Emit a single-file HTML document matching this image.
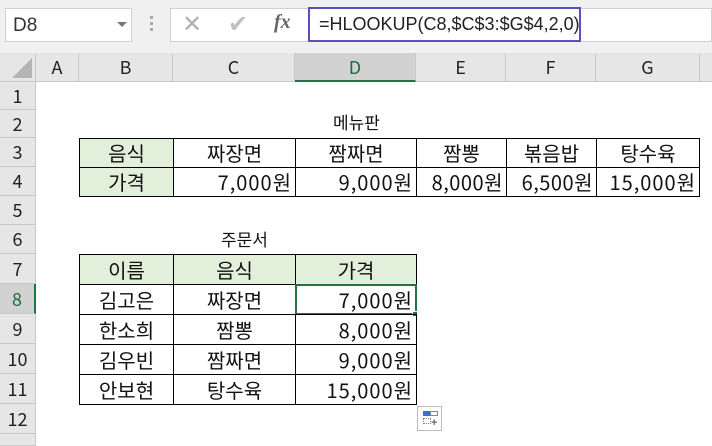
<!DOCTYPE html>
<html><head><meta charset="utf-8"><style>
*{margin:0;padding:0;box-sizing:border-box}
html,body{width:712px;height:446px;overflow:hidden}
body{background:#fff;position:relative;font-family:"Liberation Sans","Noto Sans CJK KR",sans-serif}
.a{position:absolute}
.top{left:0;top:0;width:712px;height:53px;background:#f0f0f0}
.ch{position:absolute;top:53px;height:29px;background:#e6e6e6;border-right:1px solid #c8c8c8;border-bottom:1px solid #c8c8c8;font-size:18px;color:#222;text-align:center;line-height:29px;font-family:"Noto Sans CJK KR",sans-serif}
.rh{position:absolute;left:0;width:36px;background:#e6e6e6;border-right:1px solid #c8c8c8;border-bottom:1px solid #c8c8c8;font-size:18px;color:#222;text-align:center;font-family:"Noto Sans CJK KR",sans-serif}
.c{position:absolute;border:1px solid #000;font-size:20px;color:#111;display:flex;align-items:center;justify-content:center;font-family:"Noto Sans CJK KR",sans-serif;line-height:1;white-space:nowrap}
.g{background:#e2efda}
.r{justify-content:flex-end;padding-right:3px;letter-spacing:1px}
</style></head><body>
<div class="a top"></div>
<div class="a" style="left:5px;top:8px;width:127px;height:34px;background:#fff;border:1px solid #d0d0d0;font-size:19px;color:#333;padding:6px 0 0 7px">D8</div>
<div class="a" style="left:117px;top:22px;width:0;height:0;border-left:5px solid transparent;border-right:5px solid transparent;border-top:5px solid #777"></div>
<div class="a" style="left:150px;top:16px;width:3px;height:3px;background:#aaa;box-shadow:0 6px #aaa,0 12px #aaa"></div>
<div class="a" style="left:170px;top:8px;width:542px;height:34px;background:#fff;border:1px solid #d0d0d0"></div>
<div class="a" style="left:182px;top:10px;font-size:24px;color:#b0b0b0">✕</div>
<div class="a" style="left:228px;top:10px;font-size:24px;color:#c0c0c0">✔</div>
<div class="a" style="left:274px;top:11px;font-size:20px;color:#666;font-style:italic;font-family:'Liberation Serif',serif;font-weight:bold">fx</div>
<div class="a" style="left:308px;top:7px;width:273px;height:35px;border:2px solid #5a4fc0;background:#fff;font-size:18px;color:#222;padding:5px 0 0 9px;white-space:nowrap">=HLOOKUP(C8,$C$3:$G$4,2,0)</div>

<div class="ch" style="left:0;width:36px;background:#e6e6e6"></div>
<div class="a" style="left:12px;top:58px;width:0;height:0;border-left:20px solid transparent;border-bottom:20px solid #b4b4b4"></div>
<div class="ch" style="left:36px;width:43px">A</div>
<div class="ch" style="left:79px;width:94px">B</div>
<div class="ch" style="left:173px;width:122px">C</div>
<div class="ch" style="left:295px;width:121px;background:#d2d2d2;color:#1f6b3d;border-bottom:2px solid #217346">D</div>
<div class="ch" style="left:416px;width:90px">E</div>
<div class="ch" style="left:506px;width:90px">F</div>
<div class="ch" style="left:596px;width:104px">G</div>
<div class="ch" style="left:700px;width:20px"></div>

<div class="rh" style="top:82px;height:28px;line-height:28px">1</div>
<div class="rh" style="top:110px;height:28px;line-height:28px">2</div>
<div class="rh" style="top:138px;height:29px;line-height:29px">3</div>
<div class="rh" style="top:167px;height:29px;line-height:29px">4</div>
<div class="rh" style="top:196px;height:29px;line-height:29px">5</div>
<div class="rh" style="top:225px;height:29px;line-height:29px">6</div>
<div class="rh" style="top:254px;height:30px;line-height:30px">7</div>
<div class="rh" style="top:284px;height:30px;line-height:30px;background:#d2d2d2;color:#1f6b3d;border-right:2px solid #217346">8</div>
<div class="rh" style="top:314px;height:30px;line-height:30px">9</div>
<div class="rh" style="top:344px;height:30px;line-height:30px">10</div>
<div class="rh" style="top:374px;height:30px;line-height:30px">11</div>
<div class="rh" style="top:404px;height:30px;line-height:30px">12</div>
<div class="rh" style="top:434px;height:12px"></div>

<div class="a" style="left:333px;top:112px;font-size:17px;color:#111;font-family:'Noto Sans CJK KR',sans-serif;line-height:1.2">메뉴판</div>
<div class="c g" style="left:79px;top:138px;width:95px;height:30px">음식</div>
<div class="c" style="left:173px;top:138px;width:123px;height:30px">짜장면</div>
<div class="c" style="left:295px;top:138px;width:122px;height:30px">짬짜면</div>
<div class="c" style="left:416px;top:138px;width:91px;height:30px">짬뽕</div>
<div class="c" style="left:506px;top:138px;width:91px;height:30px">볶음밥</div>
<div class="c" style="left:596px;top:138px;width:104px;height:30px">탕수육</div>
<div class="c g" style="left:79px;top:167px;width:95px;height:30px">가격</div>
<div class="c r" style="left:173px;top:167px;width:123px;height:30px">7,000원</div>
<div class="c r" style="left:295px;top:167px;width:122px;height:30px">9,000원</div>
<div class="c r" style="left:416px;top:167px;width:91px;height:30px;letter-spacing:0.5px">8,000원</div>
<div class="c r" style="left:506px;top:167px;width:91px;height:30px;letter-spacing:0.5px">6,500원</div>
<div class="c r" style="left:596px;top:167px;width:104px;height:30px">15,000원</div>

<div class="a" style="left:221px;top:229px;font-size:17px;color:#111;font-family:'Noto Sans CJK KR',sans-serif;line-height:1.2">주문서</div>
<div class="c g" style="left:79px;top:254px;width:95px;height:31px">이름</div>
<div class="c g" style="left:173px;top:254px;width:123px;height:31px">음식</div>
<div class="c g" style="left:295px;top:254px;width:122px;height:31px">가격</div>
<div class="c" style="left:79px;top:284px;width:95px;height:31px">김고은</div>
<div class="c" style="left:173px;top:284px;width:123px;height:31px">짜장면</div>
<div class="c r" style="left:295px;top:284px;width:122px;height:31px;border:2px solid #217346;padding-right:2px">7,000원</div>
<div class="a" style="left:412px;top:311px;width:6px;height:6px;background:#217346;border:1px solid #fff"></div>
<div class="c" style="left:79px;top:314px;width:95px;height:31px">한소희</div>
<div class="c" style="left:173px;top:314px;width:123px;height:31px">짬뽕</div>
<div class="c r" style="left:295px;top:314px;width:122px;height:31px">8,000원</div>
<div class="c" style="left:79px;top:344px;width:95px;height:31px">김우빈</div>
<div class="c" style="left:173px;top:344px;width:123px;height:31px">짬짜면</div>
<div class="c r" style="left:295px;top:344px;width:122px;height:31px">9,000원</div>
<div class="c" style="left:79px;top:374px;width:95px;height:31px">안보현</div>
<div class="c" style="left:173px;top:374px;width:123px;height:31px">탕수육</div>
<div class="c r" style="left:295px;top:374px;width:122px;height:31px">15,000원</div>

<div class="a" style="left:417px;top:406px;width:25px;height:25px;border:1px solid #bbb;background:#fff">
<div class="a" style="left:5px;top:4px;width:8px;height:5px;background:#3b6fd8"></div>
<div class="a" style="left:12px;top:4px;width:8px;height:5px;border:1px solid #888"></div>
<div class="a" style="left:5px;top:11px;width:8px;height:6px;border:1px dotted #888"></div>
<div class="a" style="left:13px;top:11px;font-size:11px;font-weight:bold;color:#666;line-height:10px">+</div>
</div>
</body></html>
